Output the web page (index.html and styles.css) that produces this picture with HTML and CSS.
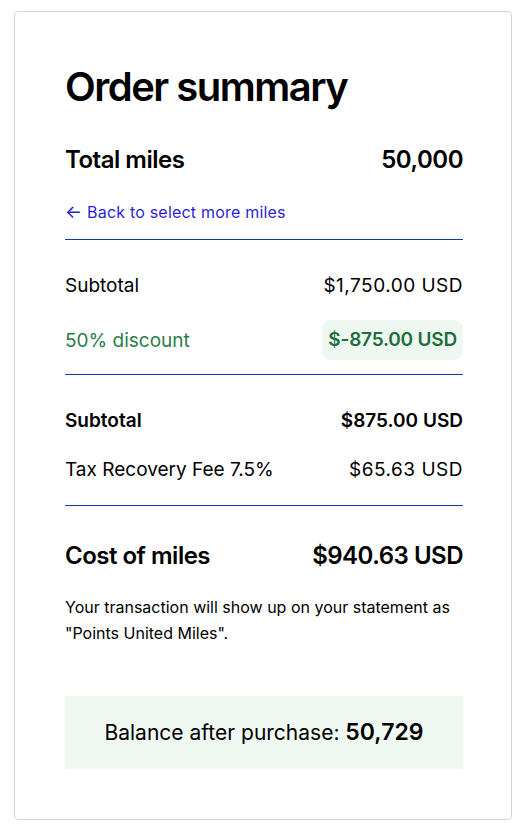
FILE: index.html
```html
<!DOCTYPE html>
<html lang="en">

<head>
    <meta charset="UTF-8">
    <meta name="viewport" content="width=device-width, initial-scale=1.0">
    <title>Order summary</title>
    <link rel="stylesheet" href="styles.css">
</head>

<body>
    <div class="card">
        <h1 class="title">Order summary</h1>

        <div class="row total">
            <span>Total miles</span>
            <span>50,000</span>
        </div>
        <a class="back" href="#"><span class="arrow">&larr;</span> Back to select more miles</a>

        <div class="section first">
            <div class="row">
                <span>Subtotal</span>
                <span class="amount">$1,750.00 USD</span>
            </div>
            <div class="row discount">
                <span>50% discount</span>
                <span class="badge">$-875.00 USD</span>
            </div>
        </div>

        <div class="section">
            <div class="row strong">
                <span>Subtotal</span>
                <span>$875.00 USD</span>
            </div>
            <div class="row">
                <span>Tax Recovery Fee 7.5%</span>
                <span class="amount">$65.63 USD</span>
            </div>
        </div>

        <div class="section last">
            <div class="row total">
                <span>Cost of miles</span>
                <span>$940.63 USD</span>
            </div>
            <p class="note">Your transaction will show up on your statement as "Points United Miles".</p>
        </div>

        <div class="balance">Balance after purchase: <b>50,729</b></div>
    </div>
</body>

</html>
```

FILE: styles.css
```css
body {
    margin: 0;
    padding: 0;
    font-family: Inter, "Open Sans", sans-serif;
    color: #000;
    background: #fff;
}

.card {
    box-sizing: border-box;
    width: 498px;
    height: 809px;
    margin: 11px 0 0 14px;
    padding: 51px 48px 0 50px;
    border: 1px solid #d2d6de;
    border-radius: 4px;
}

.title {
    margin: 0;
    font-size: 40px;
    line-height: 48px;
    font-weight: 600;
    letter-spacing: -1.5px;
}

.row {
    display: flex;
    justify-content: space-between;
    align-items: center;
    font-size: 19px;
}

.amount {
    letter-spacing: 0.5px;
}

.total {
    margin-top: 33px;
    font-size: 24px;
    line-height: 32px;
    font-weight: 600;
    letter-spacing: -0.5px;
}

.back {
    display: block;
    margin-top: 26px;
    padding-bottom: 17px;
    font-size: 16px;
    line-height: 20px;
    letter-spacing: 0.2px;
    color: #2a1fd6;
    text-decoration: none;
}

.arrow {
    font-size: 18px;
}

.section {
    border-top: 1px solid #0a3aa6;
    padding: 25px 0 16px;
}

.section.first {
    padding-bottom: 14px;
}

.section .row {
    height: 40px;
    margin-top: 9px;
}

.section .row:first-child {
    margin-top: 0;
}

.section .discount {
    margin-top: 15px;
}

.discount {
    color: #2a7d4c;
}

.badge {
    padding: 0 6px;
    height: 40px;
    line-height: 40px;
    background: #eef8f1;
    border-radius: 9px;
    font-weight: 600;
    letter-spacing: -0.2px;
    color: #1e6e3e;
}

.strong {
    font-weight: 600;
}

.section.last {
    padding: 30px 0 0;
}

.section .total {
    margin-top: 0;
}

.note {
    margin: 18px 0 0;
    font-size: 16px;
    line-height: 26px;
}

.balance {
    margin-top: 50px;
    height: 73px;
    line-height: 73px;
    background: #eff9f2;
    text-align: center;
    font-size: 21px;
}

.balance b {
    font-size: 23px;
    font-weight: 600;
}
```
